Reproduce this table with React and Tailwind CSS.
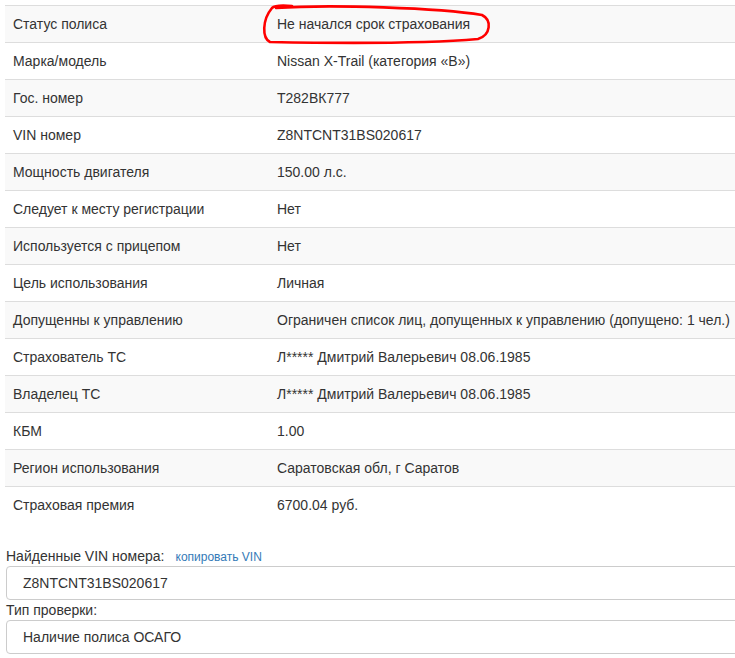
import React from "react";

const rows = [
  ["Статус полиса", "Не начался срок страхования"],
  ["Марка/модель", "Nissan X-Trail (категория «B»)"],
  ["Гос. номер", "Т282ВК777"],
  ["VIN номер", "Z8NTCNT31BS020617"],
  ["Мощность двигателя", "150.00 л.с."],
  ["Следует к месту регистрации", "Нет"],
  ["Используется с прицепом", "Нет"],
  ["Цель использования", "Личная"],
  ["Допущенны к управлению", "Ограничен список лиц, допущенных к управлению (допущено: 1 чел.)"],
  ["Страхователь ТС", "Л***** Дмитрий Валерьевич 08.06.1985"],
  ["Владелец ТС", "Л***** Дмитрий Валерьевич 08.06.1985"],
  ["КБМ", "1.00"],
  ["Регион использования", "Саратовская обл, г Саратов"],
  ["Страховая премия", "6700.04 руб."],
];

export default function App() {
  return (
    <div
      className="relative w-[735px] h-[658px] overflow-hidden bg-white text-[14px] leading-[20px] text-[#333]"
      style={{ fontFamily: '"Liberation Sans", Arial, sans-serif' }}
    >
      <div className="pt-[5px] pl-[5px]">
        <table className="w-[745px] border-collapse table-fixed">
          <colgroup>
            <col className="w-[264px]" />
            <col />
          </colgroup>
          <tbody>
            {rows.map(([k, v], i) => (
              <tr key={i} className={i % 2 === 0 ? "bg-[#f9f9f9]" : "bg-white"}>
                <td className="border-t border-[#ddd] p-[8px] whitespace-nowrap">{k}</td>
                <td className="border-t border-[#ddd] p-[8px] whitespace-nowrap">{v}</td>
              </tr>
            ))}
          </tbody>
        </table>
      </div>

      <div className="pl-[6px] mt-[23px]">
        <div className="flex items-baseline h-[20px]">
          <span>Найденные VIN номера:</span>
          <span className="ml-[11px] text-[12px] text-[#337ab7]">копировать VIN</span>
        </div>
        <div className="w-[745px] h-[34px] border border-[#ccc] rounded-[4px] px-[16px] flex items-center">
          Z8NTCNT31BS020617
        </div>
        <div className="h-[20px] leading-[20px]">Тип проверки:</div>
        <div className="w-[745px] h-[34px] border border-[#ccc] rounded-[4px] px-[16px] flex items-center">
          Наличие полиса ОСАГО
        </div>
      </div>

      <svg
        className="absolute left-0 top-0 pointer-events-none"
        width="735"
        height="60"
        viewBox="0 0 735 60"
      >
        <path
          d="M 276 8 C 330 4, 440 8, 482 15 C 492 20, 491 35, 478 39 C 420 44, 320 43, 270 42 C 262 38, 262 20, 272 8 C 275 5, 282 5, 292 6"
          fill="none"
          stroke="#ff0000"
          strokeWidth="2.6"
          strokeLinecap="round"
          strokeLinejoin="round"
        />
      </svg>
    </div>
  );
}
